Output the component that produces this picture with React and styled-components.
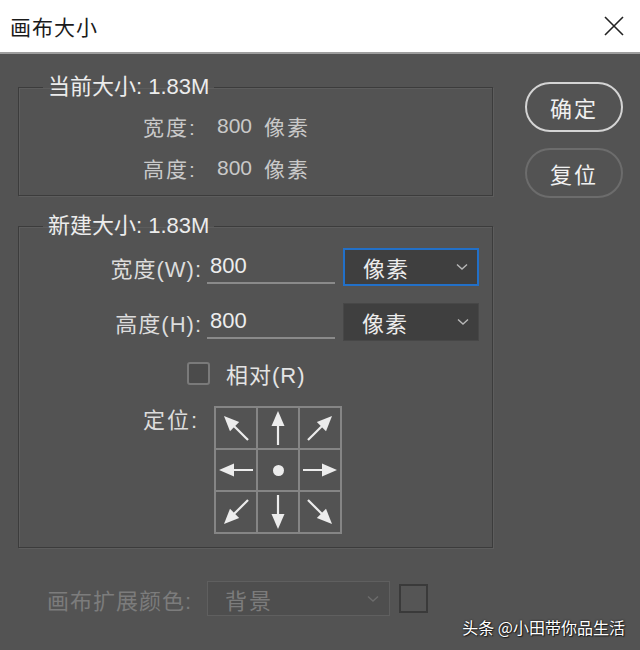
import styled, { createGlobalStyle } from "styled-components";

const GlobalStyle = createGlobalStyle`
  html, body {
    margin: 0;
    padding: 0;
    background: #535353;
  }
  body {
    font-family: "Liberation Sans", "Noto Sans CJK SC", sans-serif;
  }
`;

const Arrow = ({ angle }) => (
  <svg width="40" height="40" viewBox="0 0 40 40" style={{ transform: `rotate(${angle}deg)` }}>
    <line x1="20" y1="37" x2="20" y2="16" stroke="#ececec" strokeWidth="2.2" />
    <polygon points="20,3 26.5,18 13.5,18" fill="#ececec" />
  </svg>
);

const Chevron = ({ color }) => (
  <svg width="12" height="8" viewBox="0 0 12 8">
    <polyline points="1,1.5 6,6 11,1.5" fill="none" stroke={color} strokeWidth="1.4" />
  </svg>
);

const App = () => {
  const cells = [-45, 0, 45, -90, null, 90, -135, 180, 135];
  return (
    <Window>
      <GlobalStyle />
      <TitleBar>
        <Title>画布大小</Title>
        <svg width="22" height="22" viewBox="0 0 22 22">
          <path d="M2 2 L20 20 M20 2 L2 20" stroke="#222" strokeWidth="1.6" />
        </svg>
      </TitleBar>
      <Body>
        <Left>
          <Group>
            <Legend>当前大小: 1.83M</Legend>
            <InfoRow>
              <InfoLabel>宽度:</InfoLabel>
              <span>800</span>
              <Unit>像素</Unit>
            </InfoRow>
            <InfoRow>
              <InfoLabel>高度:</InfoLabel>
              <span>800</span>
              <Unit>像素</Unit>
            </InfoRow>
          </Group>
          <Group $gap>
            <Legend>新建大小: 1.83M</Legend>
            <FieldRow>
              <FieldLabel>宽度(W):</FieldLabel>
              <Input>800</Input>
              <Select $active>
                <span>像素</span>
                <Chevron color="#b8b8b8" />
              </Select>
            </FieldRow>
            <FieldRow $second>
              <FieldLabel>高度(H):</FieldLabel>
              <Input>800</Input>
              <Select>
                <span>像素</span>
                <Chevron color="#b8b8b8" />
              </Select>
            </FieldRow>
            <CheckRow>
              <Box />
              <span>相对(R)</span>
            </CheckRow>
            <AnchorRow>
              <AnchorLabel>定位:</AnchorLabel>
              <AnchorGrid>
                {cells.map((a, i) => (
                  <Cell key={i}>{a === null ? <Dot /> : <Arrow angle={a} />}</Cell>
                ))}
              </AnchorGrid>
            </AnchorRow>
          </Group>
        </Left>
        <Buttons>
          <Button $primary>确定</Button>
          <Button>复位</Button>
        </Buttons>
      </Body>
      <ExtendRow>
        <ExtendLabel>画布扩展颜色:</ExtendLabel>
        <DimSelect>
          <span>背景</span>
          <Chevron color="#6c6c6c" />
        </DimSelect>
        <Swatch />
      </ExtendRow>
      <Watermark>头条 @小田带你品生活</Watermark>
    </Window>
  );
};

const Window = styled.div`
  width: 640px;
  height: 650px;
  overflow: hidden;
  background: #535353;
  display: flex;
  flex-direction: column;
`;
const TitleBar = styled.div`
  box-sizing: border-box;
  height: 54px;
  background: #fff;
  border-bottom: 2px solid #9e9e9e;
  display: flex;
  align-items: center;
  justify-content: space-between;
  padding: 0 15px 0 10px;
`;
const Title = styled.div`
  font-family: "Noto Sans CJK SC", sans-serif;
  font-size: 21px;
  color: #1b1b1b;
  letter-spacing: 1px;
`;
const Body = styled.div`
  display: flex;
  gap: 32px;
  padding: 20px 0 0 18px;
`;
const Left = styled.div`
  width: 475px;
  display: flex;
  flex-direction: column;
`;
const Group = styled.fieldset`
  margin: ${(p) => (p.$gap ? "17px" : "0")} 0 0 0;
  padding: 0 0 ${(p) => (p.$gap ? "13px" : "6px")} 0;
  min-width: 0;
  border: 1px solid #3c3c3c;
  box-shadow: inset 1px 1px 0 #5d5d5d, 1px 1px 0 #5d5d5d;
`;
const Legend = styled.legend`
  margin-left: 24px;
  padding: 0 5px;
  font-size: 22px;
  line-height: 26px;
  color: #ececec;
`;
const InfoRow = styled.div`
  display: flex;
  align-items: center;
  height: 42px;
  padding-left: 124px;
  font-size: 21px;
  color: #c9c9c9;
  &:first-of-type {
    margin-top: 5px;
  }
`;
const InfoLabel = styled.span`
  width: 74px;
  letter-spacing: 2px;
`;
const Unit = styled.span`
  margin-left: 12px;
  letter-spacing: 2px;
`;
const FieldRow = styled.div`
  display: flex;
  align-items: center;
  height: 38px;
  margin-top: ${(p) => (p.$second ? "17px" : "9px")};
`;
const FieldLabel = styled.div`
  width: 183px;
  text-align: right;
  font-size: 22px;
  color: #dcdcdc;
  letter-spacing: 1px;
`;
const Input = styled.div`
  box-sizing: border-box;
  width: 128px;
  height: 36px;
  margin-left: 5px;
  align-self: flex-start;
  padding: 5px 0 0 3px;
  border-bottom: 2px solid #8a8a8a;
  font-size: 22px;
  color: #ededed;
`;
const Select = styled.div`
  box-sizing: border-box;
  width: 136px;
  height: 38px;
  margin-left: 8px;
  display: flex;
  align-items: center;
  justify-content: space-between;
  padding: 0 9px 0 18px;
  background: #3f3f3f;
  border: ${(p) => (p.$active ? "2px solid #2270c8" : "1px solid #474747")};
  font-size: 22px;
  color: #ececec;
  letter-spacing: 1px;
`;
const CheckRow = styled.div`
  display: flex;
  align-items: center;
  height: 24px;
  margin-top: 20px;
  padding-left: 168px;
  font-size: 22px;
  color: #e4e4e4;
  letter-spacing: 1px;
  gap: 16px;
`;
const Box = styled.div`
  box-sizing: border-box;
  width: 23px;
  height: 23px;
  border: 2px solid #7a7a7a;
  border-radius: 3px;
  background: #4b4b4b;
`;
const AnchorRow = styled.div`
  display: flex;
  align-items: flex-start;
  margin-top: 21px;
  padding-left: 124px;
`;
const AnchorLabel = styled.div`
  width: 71px;
  line-height: 30px;
  font-size: 22px;
  color: #dcdcdc;
  letter-spacing: 2px;
`;
const AnchorGrid = styled.div`
  display: grid;
  grid-template-columns: repeat(3, 40px);
  grid-template-rows: repeat(3, 40px);
  gap: 2px;
  padding: 2px;
  background: #858585;
`;
const Cell = styled.div`
  background: #535353;
  display: flex;
  align-items: center;
  justify-content: center;
`;
const Dot = styled.div`
  width: 11px;
  height: 11px;
  border-radius: 50%;
  background: #ececec;
`;
const Buttons = styled.div`
  display: flex;
  flex-direction: column;
  gap: 16px;
  margin-top: 8px;
`;
const Button = styled.div`
  box-sizing: border-box;
  width: 98px;
  height: 50px;
  border-radius: 25px;
  border: 2px solid ${(p) => (p.$primary ? "#d4d4d4" : "#6c6c6c")};
  display: flex;
  align-items: center;
  justify-content: center;
  font-size: 22px;
  color: #f0f0f0;
  letter-spacing: 2px;
`;
const ExtendRow = styled.div`
  display: flex;
  align-items: center;
  margin-top: 33px;
  padding-left: 47px;
`;
const ExtendLabel = styled.div`
  width: 160px;
  font-size: 22px;
  color: #7c7c7c;
  letter-spacing: 1px;
`;
const DimSelect = styled.div`
  box-sizing: border-box;
  width: 183px;
  height: 35px;
  display: flex;
  align-items: center;
  justify-content: space-between;
  padding: 0 10px 0 17px;
  background: #4e4e4e;
  border: 1px solid #5f5f5f;
  font-size: 22px;
  color: #7c7c7c;
  letter-spacing: 2px;
`;
const Swatch = styled.div`
  box-sizing: border-box;
  width: 29px;
  height: 29px;
  margin-left: 9px;
  border: 2px solid #3a3a3a;
  background: #555;
`;
const Watermark = styled.div`
  align-self: flex-end;
  margin: 1px 15px 0 0;
  font-family: "Noto Sans CJK SC", sans-serif;
  font-size: 16px;
  line-height: 20px;
  color: #fff;
  text-shadow: 0 0 2px #000, 1px 1px 1px #222;
`;

export default App;
